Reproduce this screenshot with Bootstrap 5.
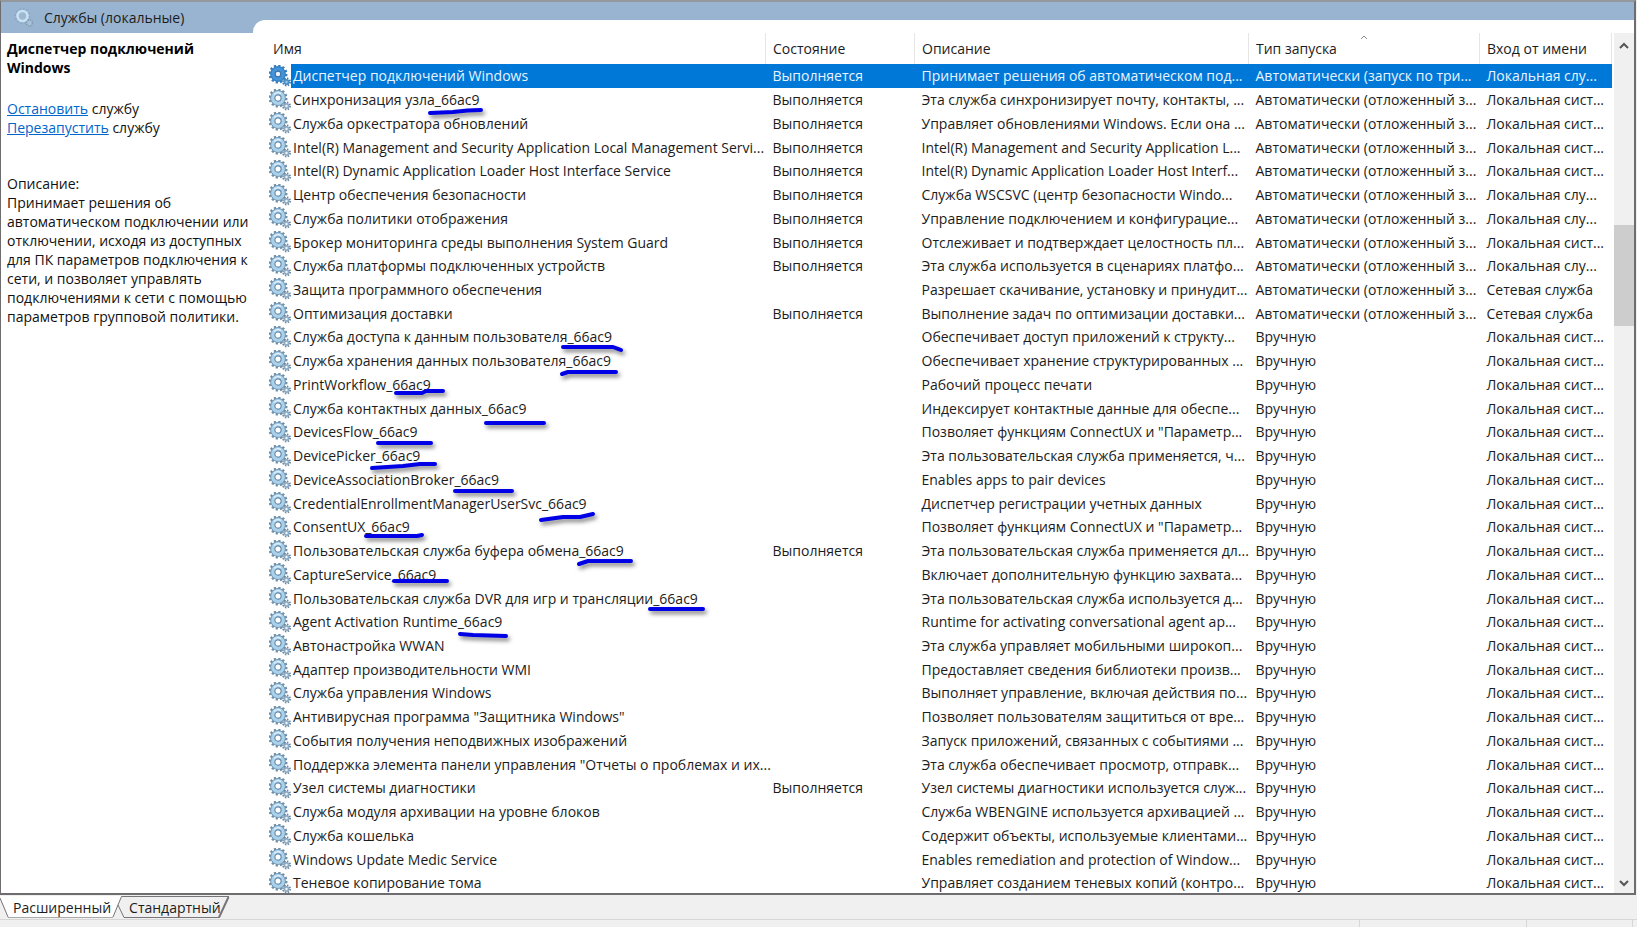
<!DOCTYPE html>
<html lang="ru">
<head>
<meta charset="utf-8">
<meta name="viewport" content="width=device-width, initial-scale=1">
<title>Службы (локальные)</title>
<link href="https://cdn.jsdelivr.net/npm/bootstrap@5.3.0/dist/css/bootstrap.min.css" rel="stylesheet">
<style>
  body { font: 14px/19px "Open Sans", "Noto Sans", sans-serif; color: #1c1c1c; background: #f0f0f0; }
  .frame { background: #99b4d1; border: solid #6f6c70; border-width: 2px 2px 2px 1px; border-top-color: #93989c; margin-right: 1px; }
  .side { width: 252px; }
  .side-title { height: 31px; padding-left: 13px; gap: 10px; }
  .side-body { padding: 6px 0 0 6px; white-space: nowrap; color: #111; }
  .side-body h1 { font-size: 14px; line-height: 19px; color: #000; margin-bottom: 22px; }
  .side-body a { color: #0066cc; }
  .side-links { margin-bottom: 37px; }
  .list-area { padding-top: 18px; }
  .list-panel { border-top-left-radius: 12px; padding: 13px 0 0 15px; }
  .svc { table-layout: fixed; border-collapse: collapse; white-space: nowrap; height: calc(100% + 2px); }
  .svc th { height: 31px; font-weight: 400; padding: 0 0 0 7px; border-right: 1px solid #e5e5e5; position: relative; }
  .svc th.name-head { padding-left: 5px; }
  .svc td { padding: 0 0 0 7px; overflow: hidden; line-height: 19px; }
  .svc td.ico { padding: 0 0 0 1px; }
  .svc td.ico svg { display: block; }
  .svc td.name { padding-left: 2px; overflow: visible; }
  .svc tr.current td:not(.ico) { background: #0078d7; color: #e9f4ff; }
  .c-ico { width: 23px; } .c-state { width: 149px; } .c-desc { width: 334px; } .c-type { width: 231px; } .c-login { width: 132px; }
  .sort { top: 2px; left: 50%; margin-left: -4px; }
  .scroller { width: 20px; background: #f0f0f0; margin: 13px 0 0 2px; }
  .scroller button { height: 22px; border: 0; background: none; padding: 0; line-height: 16px; }
  .thumb { background: #cdcdcd; }
  .gap-above { flex: 170 0 0; } .thumb { flex: 101 0 0; } .gap-below { flex: 545 0 0; }
  .marks { overflow: visible; left: 0; top: 0; pointer-events: none; filter: drop-shadow(2px 3px 2px rgba(0,0,0,.5)); }
  .tabs { height: 24px; width: 230px; padding-left: 13px; gap: 18px; }
  .tabs button { border: 0; background: none; padding: 0; color: #1c1c1c; position: relative; }
  .tab-shape { left: 0; top: 0; }
  .statusbar { height: 8px; border-top: 1px solid #d7d7d7; }
  .statusbar span { border-right: 1px solid #d7d7d7; }
  .s2 { width: 167px; } .s3 { width: 106px; }
</style>
</head>
<body class="vh-100 d-flex flex-column overflow-hidden">
<svg width="0" height="0" class="position-absolute" aria-hidden="true">
  <symbol id="gear" viewBox="0 0 22 22">
    <circle cx="9" cy="9" r="8.2" fill="none" stroke="#6f8da4" stroke-width="2.6" stroke-dasharray="2.2 2.09"/>
    <circle cx="9" cy="9" r="5.2" fill="#fff" stroke="#7199b9" stroke-width="5.4"/>
    <circle cx="9" cy="9" r="5.1" fill="none" stroke="#abd0ea" stroke-width="3.6"/>
    <path d="M5 5.5A5.3 5.3 0 0 1 12 4.6" fill="none" stroke="#dceefa" stroke-width="1.6"/>
    <circle cx="9" cy="9" r="3.1" fill="#fff" stroke="#648bab" stroke-width="1.1"/>
    <circle cx="17.5" cy="17" r="3.5" fill="none" stroke="#6d869b" stroke-width="2" stroke-dasharray="1.4 1.35"/>
    <circle cx="17.5" cy="17" r="2.1" fill="#eef5fa" stroke="#8eadc5" stroke-width="1.8"/>
  </symbol>
  <symbol id="gear-on" viewBox="0 0 22 22">
    <circle cx="9" cy="9" r="8.2" fill="none" stroke="#3a7db8" stroke-width="2.6" stroke-dasharray="2.2 2.09"/>
    <circle cx="9" cy="9" r="5.2" fill="#fff" stroke="#2f7fc4" stroke-width="5.4"/>
    <circle cx="9" cy="9" r="5.1" fill="none" stroke="#4593d6" stroke-width="3.2"/>
    <circle cx="9" cy="9" r="2.8" fill="#e6f2fc" stroke="#2b6ca6" stroke-width="1"/>
    <circle cx="17.5" cy="17" r="3.5" fill="none" stroke="#3c78ab" stroke-width="2" stroke-dasharray="1.4 1.35"/>
    <circle cx="17.5" cy="17" r="2.1" fill="#9cc8ec" stroke="#4d8ec6" stroke-width="1.8"/>
  </symbol>
</svg>

<main class="frame flex-fill d-flex position-relative">
  <aside class="side d-flex flex-column flex-shrink-0">
    <div class="side-title d-flex align-items-center">
      <svg width="20" height="20" viewBox="0 0 20 20" aria-hidden="true">
        <circle cx="8.5" cy="8" r="7" fill="none" stroke="#86a9c8" stroke-width="2" stroke-dasharray="1.8 1.86"/>
        <circle cx="8.5" cy="8" r="5" fill="#9fb8d2" stroke="#c9e2f3" stroke-width="2.6"/>
        <circle cx="15.5" cy="15" r="3" fill="#a9c3da" stroke="#8097ad" stroke-width="1.6" stroke-dasharray="1.3 1.05"/>
      </svg>
      <span>Службы (локальные)</span>
    </div>
    <div class="side-body bg-white flex-fill">
      <h1 class="fw-bold">Диспетчер подключений<br>Windows</h1>
      <div class="side-links"><a href="#">Остановить</a> службу<br><a href="#">Перезапустить</a> службу</div>
      <div>Описание:</div>
      <p class="mb-0">Принимает решения об<br>автоматическом подключении или<br>отключении, исходя из доступных<br>для ПК параметров подключения к<br>сети, и позволяет управлять<br>подключениями к сети с помощью<br>параметров групповой политики.</p>
    </div>
  </aside>

  <section class="list-area flex-fill d-flex">
    <div class="list-panel bg-white flex-fill d-flex">
      <table class="svc w-100">
        <colgroup><col class="c-ico"><col><col class="c-state"><col class="c-desc"><col class="c-type"><col class="c-login"></colgroup>
        <thead>
          <tr>
            <th colspan="2" class="name-head">Имя</th><th>Состояние</th><th>Описание</th>
            <th>Тип запуска<svg class="sort position-absolute" width="8" height="5" viewBox="0 0 8 5" fill="none" stroke="#8a8a8a"><path d="M1 4l3-3 3 3"/></svg></th>
            <th>Вход от имени</th>
          </tr>
        </thead>
        <tbody id="services"></tbody>
      </table>
    </div>
    <div class="bg-white d-flex">
      <div class="scroller d-flex flex-column">
        <button type="button" aria-label="Вверх"><svg width="10" height="7" viewBox="0 0 10 7" fill="none" stroke="#555" stroke-width="2"><path d="M1 6l4-4 4 4"/></svg></button>
        <div class="gap-above"></div><div class="thumb"></div><div class="gap-below"></div>
        <button type="button" aria-label="Вниз"><svg width="10" height="7" viewBox="0 0 10 7" fill="none" stroke="#555" stroke-width="2"><path d="M1 1l4 4 4-4"/></svg></button>
      </div>
    </div>
  </section>

  <!-- pen strokes under the per-user service suffixes -->
  <svg class="marks position-absolute" width="1" height="1" fill="none" stroke="#0000e6" stroke-width="4" stroke-linecap="round" stroke-linejoin="round" aria-hidden="true">
    <g transform="translate(-1 -2)">
      <path d="M430 113L453 112Q468 110 481 110"/>
      <path d="M563 347H613L621 350"/>
      <path d="M562 374L568 372H616"/>
      <path d="M396 393H422L426 391H443"/>
      <path d="M486 423H544"/>
      <path d="M378 443H431"/>
      <path d="M372 468L403 466L420 464H435"/>
      <path d="M455 491H512"/>
      <path d="M541 520L563 517H580L593 514"/>
      <path d="M366 536H417L422 535"/>
      <path d="M579 564L588 561H631"/>
      <path d="M394 581H447"/>
      <path d="M650 609H703"/>
      <path d="M460 634L473 635L506 636"/>
    </g>
  </svg>
</main>

<nav class="tabs position-relative d-flex align-items-center" aria-label="Вид">
  <svg class="tab-shape position-absolute" width="230" height="24" viewBox="0 0 230 24" fill="none" stroke="#77747a" aria-hidden="true">
    <path d="M0 1L8 22H113L122 1z" fill="#fff" stroke="none"/>
    <path d="M0 3L8 22M113 22L121.5 1.5H229"/>
    <path d="M8 22.5H113" stroke="#aaa"/>
    <path d="M118 10L124 22.5H219"/>
    <path d="M219 22.5L228.5 2" stroke-width="2"/>
  </svg>
  <button type="button">Расширенный</button>
  <button type="button">Стандартный</button>
</nav>
<footer class="statusbar d-flex justify-content-end"><span></span><span class="s2"></span><span class="s3"></span><span class="border-0 ps-1"></span></footer>

<script>
const RUN = "Выполняется", DELAYED = "Автоматически (отложенный з...", MANUAL = "Вручную";
const SYS = "Локальная сист...", LOC = "Локальная слу...", NET = "Сетевая служба";
const services = [
  ["Диспетчер подключений Windows", RUN, "Принимает решения об автоматическом под...", "Автоматически (запуск по три...", LOC],
  ["Синхронизация узла_66ac9", RUN, "Эта служба синхронизирует почту, контакты, ...", DELAYED, SYS],
  ["Служба оркестратора обновлений", RUN, "Управляет обновлениями Windows. Если она ...", DELAYED, SYS],
  ["Intel(R) Management and Security Application Local Management Servi...", RUN, "Intel(R) Management and Security Application L...", DELAYED, SYS],
  ["Intel(R) Dynamic Application Loader Host Interface Service", RUN, "Intel(R) Dynamic Application Loader Host Interf...", DELAYED, SYS],
  ["Центр обеспечения безопасности", RUN, "Служба WSCSVC (центр безопасности Windo...", DELAYED, LOC],
  ["Служба политики отображения", RUN, "Управление подключением и конфигурацие...", DELAYED, LOC],
  ["Брокер мониторинга среды выполнения System Guard", RUN, "Отслеживает и подтверждает целостность пл...", DELAYED, SYS],
  ["Служба платформы подключенных устройств", RUN, "Эта служба используется в сценариях платфо...", DELAYED, LOC],
  ["Защита программного обеспечения", "", "Разрешает скачивание, установку и принудит...", DELAYED, NET],
  ["Оптимизация доставки", RUN, "Выполнение задач по оптимизации доставки...", DELAYED, NET],
  ["Служба доступа к данным пользователя_66ac9", "", "Обеспечивает доступ приложений к структу...", MANUAL, SYS],
  ["Служба хранения данных пользователя_66ac9", "", "Обеспечивает хранение структурированных ...", MANUAL, SYS],
  ["PrintWorkflow_66ac9", "", "Рабочий процесс печати", MANUAL, SYS],
  ["Служба контактных данных_66ac9", "", "Индексирует контактные данные для обеспе...", MANUAL, SYS],
  ["DevicesFlow_66ac9", "", "Позволяет функциям ConnectUX и \"Параметр...", MANUAL, SYS],
  ["DevicePicker_66ac9", "", "Эта пользовательская служба применяется, ч...", MANUAL, SYS],
  ["DeviceAssociationBroker_66ac9", "", "Enables apps to pair devices", MANUAL, SYS],
  ["CredentialEnrollmentManagerUserSvc_66ac9", "", "Диспетчер регистрации учетных данных", MANUAL, SYS],
  ["ConsentUX_66ac9", "", "Позволяет функциям ConnectUX и \"Параметр...", MANUAL, SYS],
  ["Пользовательская служба буфера обмена_66ac9", RUN, "Эта пользовательская служба применяется дл...", MANUAL, SYS],
  ["CaptureService_66ac9", "", "Включает дополнительную функцию захвата...", MANUAL, SYS],
  ["Пользовательская служба DVR для игр и трансляции_66ac9", "", "Эта пользовательская служба используется д...", MANUAL, SYS],
  ["Agent Activation Runtime_66ac9", "", "Runtime for activating conversational agent ap...", MANUAL, SYS],
  ["Автонастройка WWAN", "", "Эта служба управляет мобильными широкоп...", MANUAL, SYS],
  ["Адаптер производительности WMI", "", "Предоставляет сведения библиотеки произв...", MANUAL, SYS],
  ["Служба управления Windows", "", "Выполняет управление, включая действия по...", MANUAL, SYS],
  ["Антивирусная программа \"Защитника Windows\"", "", "Позволяет пользователям защититься от вре...", MANUAL, SYS],
  ["События получения неподвижных изображений", "", "Запуск приложений, связанных с событиями ...", MANUAL, SYS],
  ["Поддержка элемента панели управления \"Отчеты о проблемах и их...", "", "Эта служба обеспечивает просмотр, отправк...", MANUAL, SYS],
  ["Узел системы диагностики", RUN, "Узел системы диагностики используется служ...", MANUAL, SYS],
  ["Служба модуля архивации на уровне блоков", "", "Служба WBENGINE используется архивацией ...", MANUAL, SYS],
  ["Служба кошелька", "", "Содержит объекты, используемые клиентами...", MANUAL, SYS],
  ["Windows Update Medic Service", "", "Enables remediation and protection of Window...", MANUAL, SYS],
  ["Теневое копирование тома", "", "Управляет созданием теневых копий (контро...", MANUAL, SYS]
];
document.getElementById("services").innerHTML = services.map((s, i) =>
  `<tr${i ? "" : ' class="current"'}><td class="ico"><svg width="22" height="22" aria-hidden="true"><use href="#gear${i ? "" : "-on"}"/></svg></td>` +
  s.map((t, n) => `<td${n ? "" : ' class="name"'}>${t}</td>`).join("") + "</tr>").join("");
</script>
<script src="https://cdn.jsdelivr.net/npm/bootstrap@5.3.0/dist/js/bootstrap.bundle.min.js"></script>
</body>
</html>
